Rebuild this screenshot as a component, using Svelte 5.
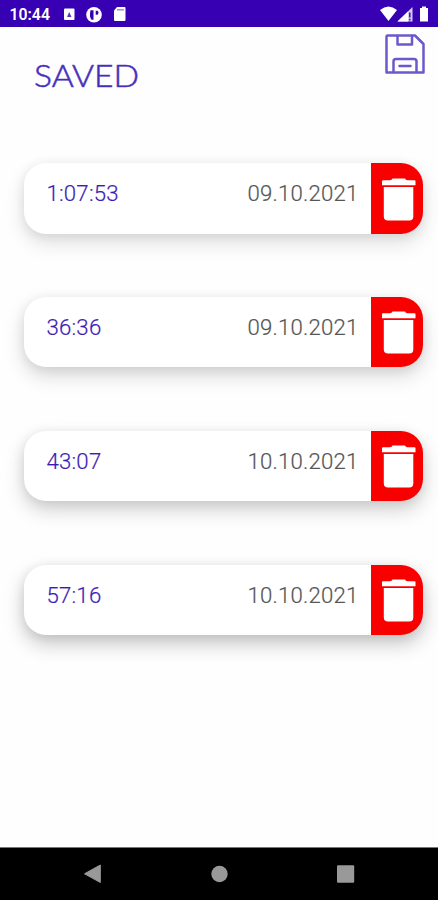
<script>
  const entries = [
    { time: '1:07:53', date: '09.10.2021', depth: 0.12 },
    { time: '36:36', date: '09.10.2021', depth: 0.15 },
    { time: '43:07', date: '10.10.2021', depth: 0.18 },
    { time: '57:16', date: '10.10.2021', depth: 0.22 },
  ];
</script>

<div class="screen">
  <div class="status">
    <span class="clock">10:44</span>
    <svg class="left-icons" width="64" height="16" viewBox="0 0 64 16" fill="#fff">
      <rect x="1" y="1.500" width="10.500" height="11.500" rx="1" />
      <path d="M4 10 6.200 5 8.500 10Z" fill="#3700b3" opacity=".8" />
      <circle cx="31" cy="7.800" r="7.800" />
      <path d="M27.500 3.200h3v9.500h-2q-2.500-3-1-9.500zM32.700 3.700h1.800q2 2 0 4h-1.800z" fill="#3700b3" />
      <path d="M54 0h7.500a1 1 0 0 1 1 1v12a1 1 0 0 1-1 1H52a1 1 0 0 1-1-1V3.500z" />
      <path d="M54 2.800h7" stroke="#3700b3" stroke-width="1.500" opacity=".45" />
    </svg>
    <svg class="right-icons" width="52" height="17" viewBox="0 0 52 17" fill="#fff">
      <path d="M1 4Q9.500-3 18 4L9.500 15z" />
      <path d="M33.500 1V15.500H18.500z" opacity=".8" />
      <path d="M29 5.500 18.500 15.500H29z" />
      <path d="M30.800 6.500v5M30.800 12.800v1.600" stroke="#3700b3" stroke-width="1.400" />
      <path d="M43 .5h4v1.500h2V15.500h-8V2h2z" />
    </svg>
  </div>

  <header>
    <h1>SAVED</h1>
    <svg class="save" width="40" height="40" viewBox="0 0 40 40" fill="none" stroke="#6c58cd" stroke-width="2.500" stroke-linejoin="round" stroke-linecap="round">
      <path d="M2.500 1.500H30L38.500 10V38.500H1.500V2.500a1 1 0 0 1 1-1z" />
      <path d="M12.500 2v8.500H27V2" />
      <path d="M8.500 38V27.500q0-2.500 2.500-2.500h18q2.500 0 2.500 2.500V38M14.500 32h11" />
    </svg>
  </header>

  <main>
    {#each entries as entry}
      <article class="card" style="--depth: {entry.depth}">
        <span class="time">{entry.time}</span>
        <span class="date">{entry.date}</span>
        <button class="delete" aria-label="Delete">
          <svg width="34" height="44" viewBox="0 0 34 44" fill="#fff">
            <path d="M0 3.300q0-1 1-1H8Q10 2 10.500 .5H23Q23.500 2 25.500 2.300H32.500q1 0 1 1V7.300H0z" />
            <path d="M1.800 9H31.300V38.500q0 4-4 4H6q-4.200 0-4.200-4z" />
          </svg>
        </button>
      </article>
    {/each}
  </main>

  <nav>
    <svg width="18" height="20" viewBox="0 0 18 20"><path d="M16.300 1v17.500L.5 9.800z" fill="#999" stroke="#999" stroke-linejoin="round" /></svg>
    <svg width="18" height="20" viewBox="0 0 18 20"><circle cx="9.500" cy="10" r="8.200" fill="#999" /></svg>
    <svg width="18" height="20" viewBox="0 0 18 20"><rect x="0" y="1.200" width="17.200" height="17.500" rx="1" fill="#999" /></svg>
  </nav>
</div>

<style>
  .screen {
    width: 438px;
    height: 900px;
    display: flex;
    flex-direction: column;
    overflow: hidden;
    background: #fefefe;
    font-family: Roboto, sans-serif;
  }
  .status {
    height: 27px;
    flex: none;
    box-sizing: border-box;
    display: flex;
    align-items: center;
    padding: 2px 7.500px 0 9.500px;
    background: #3700b3;
    color: #fff;
  }
  .clock {
    width: 53.500px;
    font-size: 15.800px;
    font-weight: 600;
    line-height: 20px;
  }
  .right-icons {
    margin-left: auto;
  }
  header {
    height: 136px;
    flex: none;
    box-sizing: border-box;
    display: flex;
    justify-content: space-between;
    align-items: flex-start;
    padding: 7px 13px 0 33.500px;
  }
  h1 {
    margin: 22.500px 0 0;
    font: 300 31px/36px Lato, sans-serif;
    color: #3f27b8;
    -webkit-text-stroke: 0.6px #5540c0;
    transform: scaleX(1.085);
    transform-origin: left;
  }
  main {
    flex: 1;
    display: flex;
    flex-direction: column;
    gap: 63.400px;
    padding: 0 15.500px 0 24px;
  }
  .card {
    height: 70.500px;
    flex: none;
    display: flex;
    border-radius: 22px;
    background: #fff;
    box-shadow:
      0 9px 20px rgba(0, 0, 0, var(--depth)),
      0 2px 12px rgba(0, 0, 0, 0.08);
    font-size: 22.200px;
    font-weight: 300;
    line-height: 26px;
    letter-spacing: 0.2px;
  }
  .time {
    margin: 17px 0 0 22.500px;
    color: #3c1cb5;
    -webkit-text-stroke: 0.2px #3c1cb5;
  }
  .date {
    margin: 17px 12.500px 0 auto;
    color: #555;
    -webkit-text-stroke: 0.2px #555;
  }
  .delete {
    width: 51.500px;
    padding: 0 0 0 11px;
    border: 0;
    border-radius: 0 22px 22px 0;
    background: #f80000;
    display: flex;
    align-items: flex-start;
  }
  .delete svg {
    margin-top: 14.500px;
  }
  nav {
    height: 53px;
    flex: none;
    box-sizing: border-box;
    display: flex;
    justify-content: space-between;
    align-items: center;
    padding: 0 83.500px;
    border-top: 1px solid #777;
    background: #000;
  }
</style>
